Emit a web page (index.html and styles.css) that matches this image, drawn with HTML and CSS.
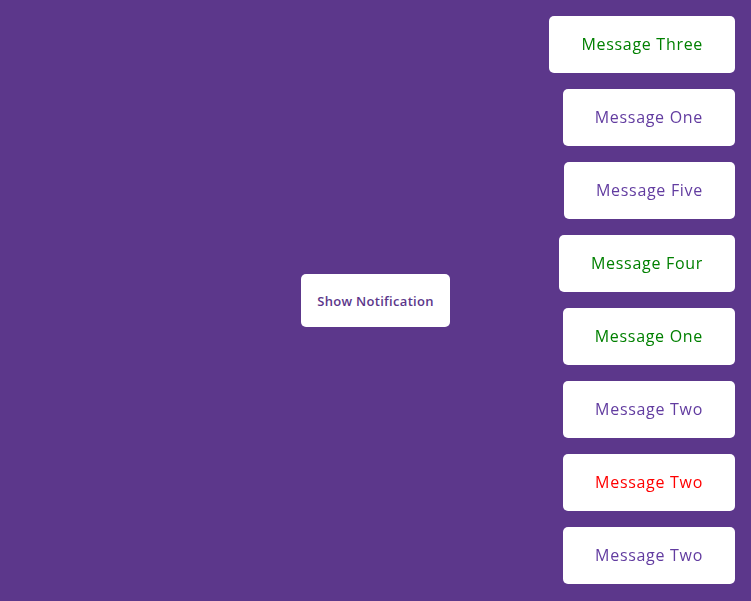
FILE: index.html
```html
<!DOCTYPE html>
<html>
<head>
<meta charset="utf-8">
<link rel="stylesheet" href="styles.css">
</head>
<body>
<button class="show-btn">Show Notification</button>
<div class="toasts">
  <div class="toast success">Message Three</div>
  <div class="toast info">Message One</div>
  <div class="toast info">Message Five</div>
  <div class="toast success">Message Four</div>
  <div class="toast success">Message One</div>
  <div class="toast info">Message Two</div>
  <div class="toast error">Message Two</div>
  <div class="toast info">Message Two</div>
</div>
</body>
</html>
```

FILE: styles.css
```css
html, body {
  height: 100%;
}
body {
  margin: 0;
  background: #5c378b;
  font-family: "Open Sans", "Noto Sans", sans-serif;
  display: flex;
  align-items: center;
  justify-content: center;
  overflow: hidden;
}
.show-btn {
  background: #fff;
  color: #5c378b;
  border: 0;
  border-radius: 5px;
  font-family: inherit;
  font-size: 13px;
  font-weight: 600;
  letter-spacing: 0.3px;
  height: 53px;
  padding: 0 16px;
  cursor: pointer;
}
.toasts {
  position: fixed;
  top: 16px;
  right: 16px;
  display: flex;
  flex-direction: column;
  align-items: flex-end;
  gap: 16px;
}
.toast {
  background: #fff;
  border-radius: 5px;
  height: 57px;
  box-sizing: border-box;
  padding: 0 32px 1px;
  display: flex;
  align-items: center;
  font-size: 16px;
  letter-spacing: 0.7px;
}
.toast.success { color: #008000; }
.toast.info { color: #623ca0; }
.toast.error { color: #ff0000; }
```
